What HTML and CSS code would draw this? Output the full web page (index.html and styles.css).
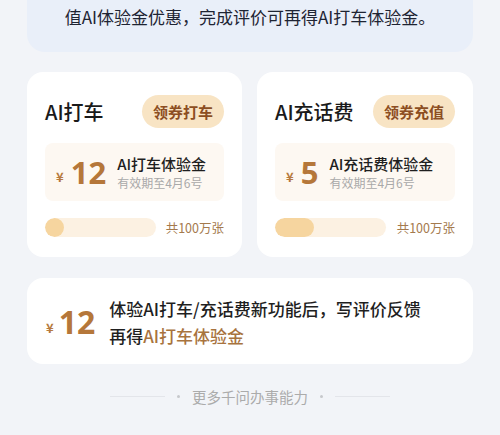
FILE: index.html
```html
<!DOCTYPE html>
<html lang="zh">
<head>
<meta charset="utf-8">
<link rel="stylesheet" href="styles.css">
</head>
<body>
<div class="page">
  <div class="intro">值AI体验金优惠，完成评价可再得AI打车体验金。</div>
  <div class="grid">
    <div class="card">
      <div class="head">
        <div class="title">AI打车</div>
        <div class="btn">领券打车</div>
      </div>
      <div class="voucher">
        <span class="yen">¥</span><span class="amt">12</span>
        <div class="vinfo">
          <div class="vname">AI打车体验金</div>
          <div class="vdate">有效期至4月6号</div>
        </div>
      </div>
      <div class="prog">
        <div class="bar"><div class="fill" style="width:19px"></div></div>
        <div class="total">共100万张</div>
      </div>
    </div>
    <div class="card">
      <div class="head">
        <div class="title">AI充话费</div>
        <div class="btn">领券充值</div>
      </div>
      <div class="voucher">
        <span class="yen">¥</span><span class="amt">5</span>
        <div class="vinfo">
          <div class="vname">AI充话费体验金</div>
          <div class="vdate">有效期至4月6号</div>
        </div>
      </div>
      <div class="prog">
        <div class="bar"><div class="fill" style="width:39px"></div></div>
        <div class="total">共100万张</div>
      </div>
    </div>
  </div>
  <div class="review">
    <span class="yen">¥</span><span class="amt">12</span>
    <div class="rtext">体验AI打车/充话费新功能后，写评价反馈<br>再得<span class="hl">AI打车体验金</span></div>
  </div>
  <div class="more">
    <span class="line"></span><span class="dot"></span><span class="mtext">更多千问办事能力</span><span class="dot"></span><span class="line"></span>
  </div>
</div>
</body>
</html>
```

FILE: styles.css
```css
* { box-sizing: border-box; }
html, body { margin: 0; padding: 0; }
body {
  background: #f2f4f8;
  font-family: "Noto Sans CJK SC", "Noto Sans", sans-serif;
  color: #1f1f1f;
  width: 500px;
  height: 435px;
  overflow: hidden;
}
.page { padding: 0 27px; }
.intro {
  margin-top: -20px;
  background: #e9eff9;
  border-radius: 18px;
  padding: 25px 0 23px;
  text-align: center;
  font-size: 17px;
  line-height: 24px;
  color: #1e2433;
}
.grid {
  margin-top: 20px;
  display: grid;
  grid-template-columns: 215px 216px;
  column-gap: 15px;
}
.card {
  background: #fff;
  border-radius: 16px;
  padding: 23px 18px 20px;
}
.head {
  display: flex;
  align-items: center;
  justify-content: space-between;
  height: 33px;
}
.title {
  font-size: 20px;
  font-weight: 500;
  color: #1a1a1a;
}
.btn {
  height: 33px;
  line-height: 33px;
  padding: 0 11px;
  border-radius: 17px;
  background: #f8e4c4;
  color: #8c4e22;
  font-size: 15px;
  font-weight: 700;
}
.voucher {
  margin-top: 15px;
  height: 58px;
  background: #fdf8f2;
  border-radius: 8px;
  display: flex;
  align-items: center;
  padding-left: 11px;
}
.yen {
  font-size: 13px;
  font-weight: 700;
  color: #b67a3e;
  margin-top: 8px;
  margin-right: 7px;
}
.amt {
  font-family: "Noto Sans", "Noto Sans CJK SC", sans-serif;
  font-size: 31px;
  font-weight: 700;
  color: #b5773a;
  line-height: 36px;
}
.vinfo { margin-left: 11px; }
.vname {
  font-size: 15px;
  font-weight: 500;
  line-height: 20px;
  color: #1f1f1f;
}
.vdate {
  font-size: 12px;
  line-height: 17px;
  color: #a9a9a9;
}
.prog {
  margin-top: 17px;
  display: flex;
  align-items: center;
  justify-content: space-between;
  height: 19px;
}
.bar {
  width: 111px;
  height: 19px;
  border-radius: 10px;
  background: #fcf1e2;
  overflow: hidden;
}
.fill {
  height: 19px;
  border-radius: 10px;
  background: #f6d59f;
}
.total {
  font-size: 12.5px;
  color: #a47a4d;
}
.review {
  margin-top: 21px;
  background: #fff;
  border-radius: 16px;
  padding: 17px 0 15px 19px;
  display: flex;
  align-items: center;
}
.review .amt { font-size: 32px; }
.review .yen { margin-top: 10px; margin-right: 5px; }
.rtext {
  margin-left: 14px;
  font-size: 17px;
  font-weight: 500;
  line-height: 27px;
  color: #1f1f1f;
}
.hl { color: #a8733e; }
.more {
  margin-top: 22px;
  display: flex;
  align-items: center;
  justify-content: center;
  height: 20px;
  color: #ababab;
  font-size: 14.5px;
}
.line {
  width: 55px;
  height: 1px;
  background: #e3e5ea;
}
.dot {
  width: 3px;
  height: 3px;
  border-radius: 50%;
  background: #c6c8cc;
  margin: 0 12px;
}
```
